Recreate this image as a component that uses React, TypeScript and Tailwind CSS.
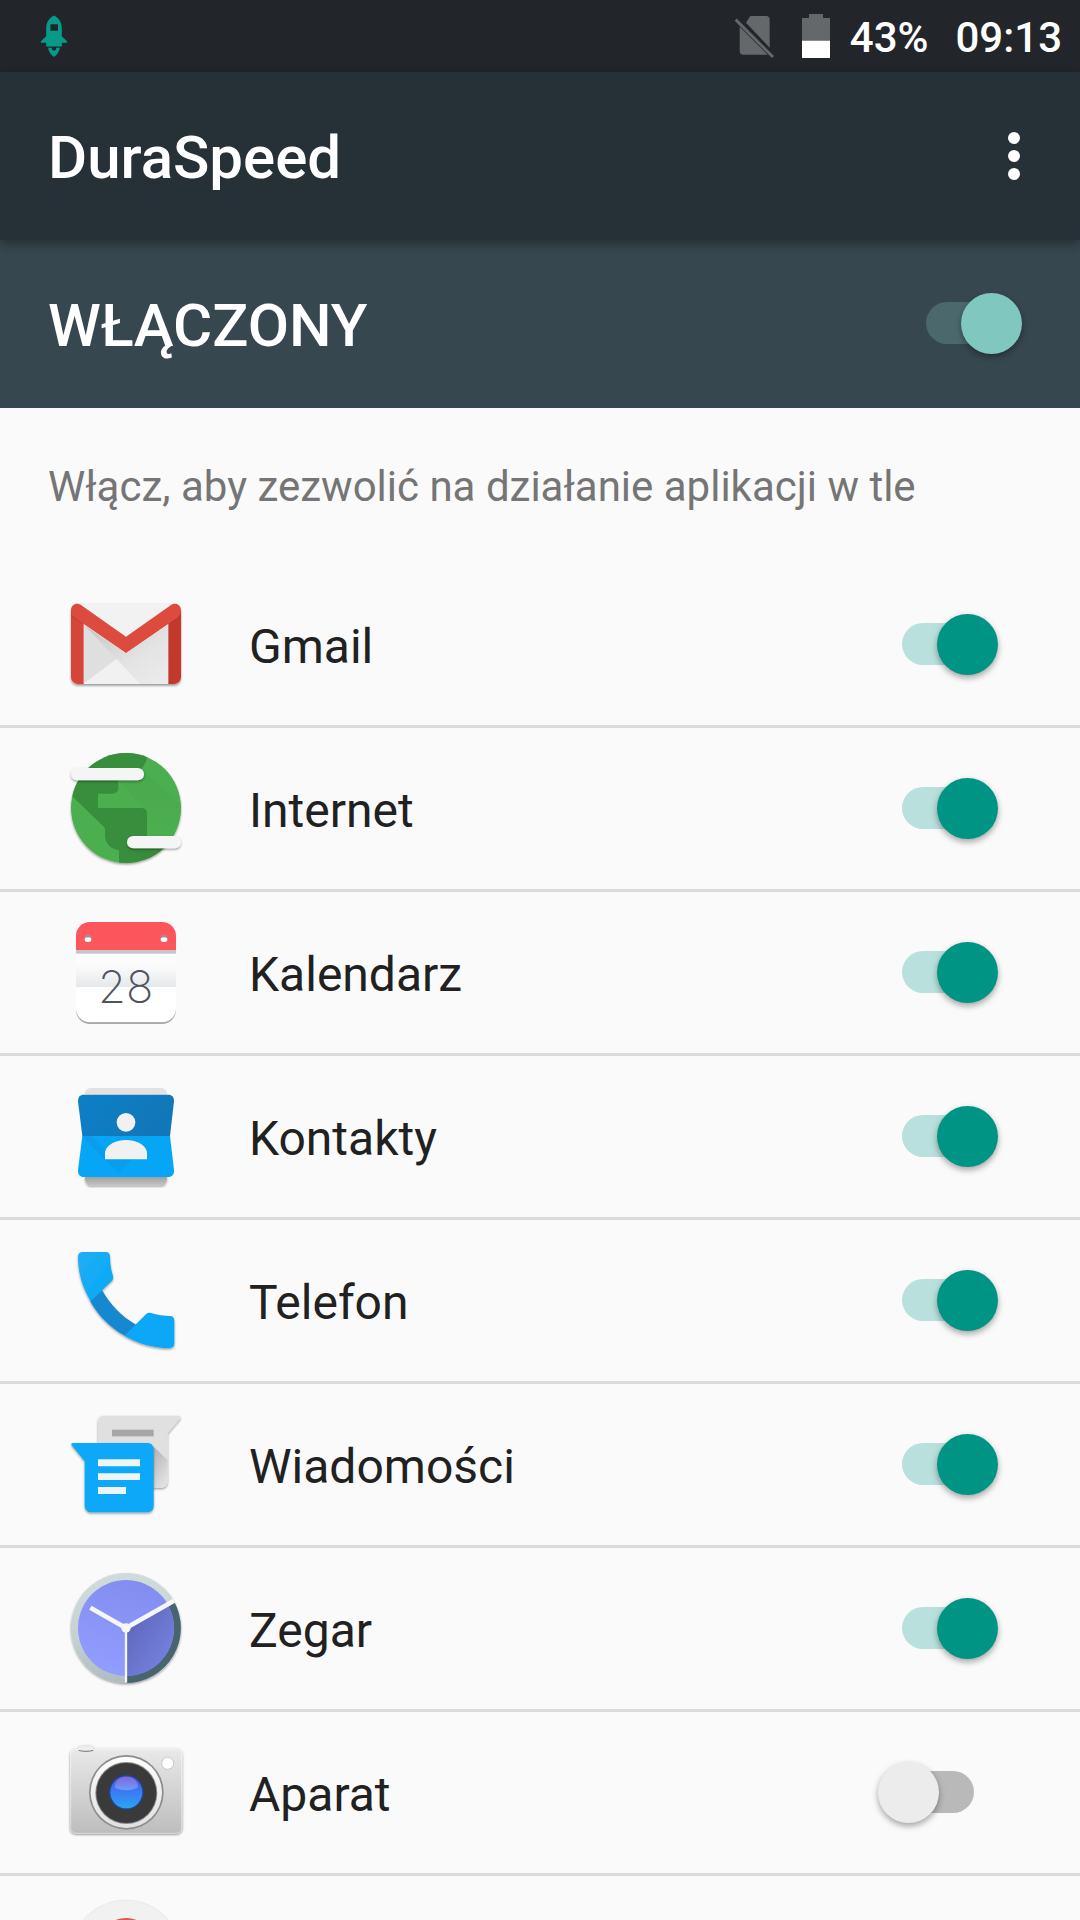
import { useState } from "react";
import type { ReactNode } from "react";

const iconClass = "size-[120px] shrink-0 overflow-visible";

function Shadow({ id, dy = 4, blur = 3, opacity = 0.4 }: { id: string; dy?: number; blur?: number; opacity?: number }) {
  return (
    <filter id={id} x="-20%" y="-20%" width="140%" height="150%">
      <feDropShadow dx="0" dy={dy} stdDeviation={blur} floodColor="#000" floodOpacity={opacity} />
    </filter>
  );
}

function GmailIcon() {
  return (
    <svg viewBox="48 15 360 360" className={iconClass} aria-hidden="true">
      <defs>
        <Shadow id="gm-s" dy={5} />
        <clipPath id="gm-c"><rect x="63" y="68" width="330" height="244" rx="20" /></clipPath>
        <linearGradient id="gm-g" x1="0" y1="0" x2="1" y2="1">
          <stop offset="0" stopColor="#c4c4c4" /><stop offset="0.6" stopColor="#e4e4e4" /><stop offset="1" stopColor="#ececec" />
        </linearGradient>
      </defs>
      <g filter="url(#gm-s)">
        <rect x="63" y="74" width="330" height="238" rx="20" fill="#e8e8e8" />
      </g>
      <g clipPath="url(#gm-c)">
        <rect x="80" y="68" width="296" height="244" fill="#f2f2f2" />
        <path d="M102 134 L228 220 L355 134 V312 H102Z" fill="url(#gm-g)" />
        <path d="M102 134 V308 L200 238Z" fill="#dfdfdf" />
        <path d="M102 310 L200 236 L270 312 H102Z" fill="#f1f1f1" />
        <path d="M63 90 H101 V312 H63Z" fill="#d5463a" />
        <path d="M355 90 H393 V312 H355Z" fill="#c1392d" />
        <path d="M63 108 L101 134 V134 L70 104Z M393 108 L355 134 L386 100Z" fill="#a8322a" opacity="0.6" />
      </g>
      <path d="M63 92 C63 72 82 66 96 77 L228 170 L360 77 C374 66 393 72 393 92 C393 102 388 109 381 114 L228 219 L75 114 C68 109 63 102 63 92Z" fill="#dd4b3e" />
    </svg>
  );
}

function InternetIcon() {
  return (
    <svg viewBox="48 57 360 360" className={iconClass} aria-hidden="true">
      <defs>
        <Shadow id="in-s" />
        <clipPath id="in-c"><circle cx="228" cy="234" r="165" /></clipPath>
        <linearGradient id="in-g" x1="0" y1="0" x2="0" y2="1">
          <stop offset="0" stopColor="#46a34a" /><stop offset="1" stopColor="#4caf50" />
        </linearGradient>
      </defs>
      <circle cx="228" cy="234" r="165" fill="#4caf50" filter="url(#in-s)" />
      <g clipPath="url(#in-c)">
        <path d="M275 116 L400 234 V330 L360 318 H291 V250 L205 150Z" fill="url(#in-g)" opacity="0.5" />
        <path d="M60 60 H300 C290 82 288 108 270 120 L205 150 V174 C205 185 198 191 187 191 H144 V234 H273 C285 234 291 240 291 252 V318 L345 355 L310 400 H207 V360 C180 358 165 338 165 316 V294 L60 192Z" fill="#388e3c" />
        <path d="M240 354 L290 400 H380 L375 354Z" fill="#378b3b" opacity="0.8" />
      </g>
      <g filter="url(#in-s)" fill="#f5f5f5">
        <rect x="63" y="114" width="219" height="37" rx="18.5" />
        <rect x="231" y="318" width="162" height="37" rx="18.5" />
      </g>
    </svg>
  );
}

function CalendarIcon() {
  return (
    <svg viewBox="48 39 360 360" className={iconClass} aria-hidden="true">
      <defs>
        <clipPath id="ca-c"><rect x="78" y="66" width="300" height="301" rx="42" /></clipPath>
        <linearGradient id="ca-g" x1="0" y1="0" x2="0" y2="1">
          <stop offset="0" stopColor="#fff" /><stop offset="0.4" stopColor="#fafafb" /><stop offset="1" stopColor="#e5e8ea" />
        </linearGradient>
      </defs>
      <rect x="78" y="71" width="300" height="301" rx="42" fill="#a9a9a9" />
      <g clipPath="url(#ca-c)">
        <rect x="78" y="66" width="300" height="301" fill="#fff" />
        <rect x="78" y="161" width="300" height="100" fill="url(#ca-g)" />
        <rect x="78" y="66" width="300" height="85" fill="#fc555b" />
        <rect x="78" y="150" width="300" height="11" fill="#c5c6ca" />
      </g>
      <circle cx="114" cy="114" r="11" fill="#b3868a" />
      <circle cx="342" cy="114" r="11" fill="#b3868a" />
      <ellipse cx="114" cy="119" rx="10" ry="7" fill="#fff" />
      <ellipse cx="342" cy="119" rx="10" ry="7" fill="#fff" />
      <text x="227" y="309" textAnchor="middle" fontSize="136" className="fill-[#4e5462] font-['Inter',sans-serif] font-extralight">28</text>
    </svg>
  );
}

function ContactsIcon() {
  return (
    <svg viewBox="48 21 360 360" className={iconClass} aria-hidden="true">
      <defs>
        <Shadow id="co-s" />
        <linearGradient id="co-g" x1="0" y1="0" x2="0" y2="1">
          <stop offset="0" stopColor="#9e9e9e" /><stop offset="1" stopColor="#c4c4c4" />
        </linearGradient>
        <linearGradient id="co-b" x1="0" y1="0" x2="1" y2="0.4">
          <stop offset="0" stopColor="#0c80c8" /><stop offset="1" stopColor="#1277b8" />
        </linearGradient>
      </defs>
      <path d="M104 74 C106 60 112 54 124 54 H332 C344 54 350 60 352 74Z" fill="#e2e2e2" />
      <path d="M104 320 H352 C350 338 343 346 332 346 H124 C113 346 106 338 104 320Z" fill="url(#co-g)" filter="url(#co-s)" />
      <path d="M84 94 C84 80 90 74 102 74 H354 C366 74 372 80 372 94 L360 198 H97Z" fill="url(#co-b)" />
      <path d="M97 198 H360 L372 300 C373 314 366 321 354 321 H102 C90 321 83 314 84 300Z" fill="#06a5f6" />
      <path d="M97 198 L180 284 L206 308 L245 267 H165 V240 L123 198Z" fill="#0a95e4" opacity="0.5" />
      <circle cx="228" cy="157" r="28" fill="#f1f1f1" />
      <path d="M165 268 V246 C170 222 200 210 228 210 C256 210 286 222 291 246 V268Z" fill="#f1f1f1" />
    </svg>
  );
}

function PhoneIcon() {
  return (
    <svg viewBox="48 33 360 360" className={iconClass} aria-hidden="true">
      <defs>
        <Shadow id="ph-s" />
        <linearGradient id="ph-g" x1="0" y1="0" x2="1" y2="1">
          <stop offset="0" stopColor="#22aef5" /><stop offset="1" stopColor="#03a9f4" />
        </linearGradient>
      </defs>
      <g filter="url(#ph-s)">
        <path d="M120 212 L156 180 C180 223 214 259 258 284 L226 318 C180 293 144 256 120 212Z" fill="#1488d0" />
        <path d="M98 66 H167 C176 66 180 71 180 80 C180 101 184 121 189 139 C190 145 189 149 185 153 L122 214 C97 172 84 128 84 80 C84 71 89 66 98 66Z" fill="url(#ph-g)" />
        <path d="M223 317 L289 252 C293 248 297 247 302 249 C321 255 340 258 359 258 C368 258 373 263 373 272 V340 C373 349 368 354 359 354 C311 354 265 341 223 317Z" fill="#07a7f7" />
      </g>
    </svg>
  );
}

function MessagesIcon() {
  return (
    <svg viewBox="48 525 360 360" className={iconClass} aria-hidden="true">
      <defs>
        <Shadow id="me-s" />
        <linearGradient id="me-g" x1="0" y1="0" x2="0.6" y2="1">
          <stop offset="0" stopColor="#a8a8a8" /><stop offset="1" stopColor="#e0e0e0" />
        </linearGradient>
      </defs>
      <g filter="url(#me-s)">
        <path d="M163 557 H385 C392 557 394 562 389 567 L353 610 V752 C353 766 345 773 332 773 H144 V577 C144 565 150 557 163 557Z" fill="#e0e0e0" />
      </g>
      <path d="M300 640 L353 690 V752 C353 766 345 773 332 773 H300Z" fill="url(#me-g)" />
      <rect x="186" y="599" width="125" height="20" fill="#a6a6a6" />
      <g filter="url(#me-s)">
        <path d="M70 639 H290 C304 639 311 647 311 660 V826 C311 840 304 847 290 847 H125 C111 847 104 839 104 826 V694 L65 646 C62 642 65 639 70 639Z" fill="#09a8f7" />
      </g>
      <path d="M144 688 H270 V709 H144Z M144 730 H270 V750 H144Z M144 771 H228 V792 H144Z" fill="#eef5f8" />
    </svg>
  );
}

function ClockIcon() {
  return (
    <svg viewBox="48 27 360 360" className={iconClass} aria-hidden="true">
      <defs>
        <Shadow id="cl-s" />
        <linearGradient id="cl-l" x1="0.6" y1="0" x2="0.3" y2="1">
          <stop offset="0" stopColor="#828df0" /><stop offset="1" stopColor="#919dff" />
        </linearGradient>
        <linearGradient id="cl-d" x1="0" y1="0" x2="1" y2="1">
          <stop offset="0" stopColor="#5b62b4" /><stop offset="0.8" stopColor="#7280dd" />
        </linearGradient>
        <linearGradient id="cl-r" x1="0" y1="0" x2="0" y2="1">
          <stop offset="0" stopColor="#d0dbdc" /><stop offset="0.6" stopColor="#c4d1d3" /><stop offset="1" stopColor="#aebcc0" />
        </linearGradient>
      </defs>
      <circle cx="228" cy="204" r="165" fill="url(#cl-r)" filter="url(#cl-s)" />
      <path d="M228 204 L372 124 A165 165 0 0 1 228 369Z" fill="#48646f" />
      <circle cx="228" cy="204" r="144" fill="url(#cl-l)" />
      <path d="M228 204 L354 134 A144 144 0 0 1 228 348Z" fill="url(#cl-d)" />
      <path d="M228 204 L372 122" stroke="#f5f7fa" strokeWidth="14" />
      <path d="M228 204 L121 143" stroke="#f5f7fa" strokeWidth="14" />
      <path d="M228 204 V368" stroke="#f5f7fa" strokeWidth="7" />
      <circle cx="228" cy="204" r="14" fill="#f5f7fa" />
    </svg>
  );
}

function CameraIcon() {
  return (
    <svg viewBox="48 9 360 360" className={iconClass} aria-hidden="true">
      <defs>
        <Shadow id="cm-s" dy={2} opacity={0.45} />
        <linearGradient id="cm-b" x1="0" y1="0" x2="0" y2="1">
          <stop offset="0" stopColor="#e9e9e9" /><stop offset="1" stopColor="#bdbdbd" />
        </linearGradient>
        <linearGradient id="cm-r" x1="0" y1="0" x2="0" y2="1">
          <stop offset="0" stopColor="#fdfdfd" /><stop offset="1" stopColor="#e0e0e0" />
        </linearGradient>
        <linearGradient id="cm-l" x1="0" y1="0" x2="0" y2="1">
          <stop offset="0" stopColor="#6a50d8" /><stop offset="0.4" stopColor="#3f73f4" /><stop offset="1" stopColor="#2aa5f0" />
        </linearGradient>
        <linearGradient id="cm-h" x1="0" y1="0" x2="0" y2="1">
          <stop offset="0" stopColor="#b89af0" stopOpacity="0.3" /><stop offset="1" stopColor="#9fc0ff" stopOpacity="0.5" />
        </linearGradient>
      </defs>
      <g filter="url(#cm-s)">
        <rect x="86" y="47" width="44" height="18" rx="8" fill="#d8d8d8" />
        <rect x="60" y="56" width="337" height="256" rx="18" fill="url(#cm-b)" />
      </g>
      <rect x="62" y="58" width="333" height="252" rx="16" fill="none" stroke="#fff" strokeOpacity="0.45" strokeWidth="3" />
      <rect x="86" y="49" width="44" height="11" rx="5" fill="#eee" />
      <path d="M86 61 C96 65 120 65 130 61" stroke="#777" strokeWidth="3" fill="none" />
      <circle cx="229" cy="187" r="112" fill="#8c8c8c" />
      <circle cx="229" cy="187" r="107" fill="url(#cm-r)" />
      <circle cx="229" cy="189" r="93" fill="#8a8a8a" />
      <circle cx="229" cy="189" r="90" fill="#3a3a3b" />
      <circle cx="229" cy="187" r="52" fill="#1d4795" />
      <circle cx="229" cy="187" r="48" fill="url(#cm-l)" />
      <path d="M194 172 C197 148 212 140 229 140 C247 140 261 148 264 172 C250 184 208 184 194 172Z" fill="url(#cm-h)" />
      <circle cx="353" cy="100" r="18" fill="#fff" stroke="#c9c9c9" strokeWidth="3" />
    </svg>
  );
}

function NextAppIcon() {
  return (
    <svg viewBox="48 501 360 360" className={iconClass} aria-hidden="true">
      <circle cx="228" cy="678" r="168" fill="#f1f1f1" stroke="#e4e4e4" strokeWidth="2" />
      <circle cx="228" cy="650" r="86" fill="#d9594c" />
    </svg>
  );
}

type SwitchProps = { id: string; checked: boolean; onChange: () => void; tone: "dark" | "light" };

const switchBase =
  "relative block h-[60px] w-[120px] shrink-0 cursor-pointer appearance-none before:absolute before:left-6 before:top-2 before:h-[42px] before:w-[72px] before:rounded-full after:absolute after:left-0 after:-top-px after:size-[61px] after:rounded-full after:shadow-[0_3px_6px_rgba(0,0,0,0.35)] checked:after:left-[59px]";

const tones = {
  dark: "before:bg-[#4b696d] after:bg-[#80c7bf]",
  light: "before:bg-[#b9b9b9] after:bg-[#ececec] checked:before:bg-[#b9e0dc] checked:after:bg-[#009485]",
};

function Switch({ id, checked, onChange, tone }: SwitchProps) {
  return (
    <input id={id} type="checkbox" role="switch" checked={checked} onChange={onChange} className={`${switchBase} ${tones[tone]}`} />
  );
}

const apps: { id: string; name: string; icon: ReactNode; on: boolean }[] = [
  { id: "gmail", name: "Gmail", icon: <GmailIcon />, on: true },
  { id: "internet", name: "Internet", icon: <InternetIcon />, on: true },
  { id: "kalendarz", name: "Kalendarz", icon: <CalendarIcon />, on: true },
  { id: "kontakty", name: "Kontakty", icon: <ContactsIcon />, on: true },
  { id: "telefon", name: "Telefon", icon: <PhoneIcon />, on: true },
  { id: "wiadomosci", name: "Wiadomości", icon: <MessagesIcon />, on: true },
  { id: "zegar", name: "Zegar", icon: <ClockIcon />, on: true },
  { id: "aparat", name: "Aparat", icon: <CameraIcon />, on: false },
];

function StatusBar() {
  return (
    <div className="flex h-[72px] shrink-0 items-center justify-between bg-[#22262a] pl-[38px] pr-[18px]">
      <svg viewBox="108 0 98 216" className="h-[72px] w-8 overflow-visible" aria-hidden="true">
        <path fillRule="evenodd" fill="#079a89" d="M157 45 C172 52 181 67 181 84 V109 L197 124 V129 H181 V140 H133 V129 H117 V124 L133 109 V84 C133 67 142 52 157 45Z M146 72 V92 H169 V72Z" />
        <path fill="#079a89" d="M139 144 H150 C150 150 153 153 157 153 C161 153 164 150 164 144 H175 C174 156 166 166 157 172 C148 166 140 156 139 144Z" />
      </svg>
      <div className="flex h-[72px] items-center text-[42px] font-medium leading-[48px] text-white">
        <svg viewBox="165 0 120 216" className="mr-7 h-[72px] w-10" aria-hidden="true">
          <path d="M214 48 H262 C269 48 272 52 272 59 V143 L201 68 Z" fill="#64686b" />
          <path d="M182 80 L266 164 H193 C186 164 182 160 182 153Z" fill="#64686b" />
          <path d="M170 59 L282 171" stroke="#64686b" strokeWidth="9" />
        </svg>
        <svg viewBox="366 0 84 216" className="mr-5 h-[72px] w-7" aria-hidden="true">
          <path d="M387 42 H429 V54 H450 V122 H366 V54 H387Z" fill="#64686b" />
          <path d="M366 122 H450 V174 H366Z" fill="#fff" />
        </svg>
        <span className="mr-[27px] pt-1">43%</span>
        <span className="pt-1">09:13</span>
      </div>
    </div>
  );
}

export default function App() {
  const [enabled, setEnabled] = useState(true);
  const [state, setState] = useState<Record<string, boolean>>(() => Object.fromEntries(apps.map((a) => [a.id, a.on])));

  return (
    <div className="flex h-screen flex-col overflow-hidden bg-[#fafafa] font-['Roboto',sans-serif]">
      <StatusBar />
      <header className="relative z-10 flex h-[168px] shrink-0 items-center justify-between bg-[#263137] pl-12 pr-[42px] shadow-[0_4px_10px_rgba(0,0,0,0.35)]">
        <h1 className="pt-1 text-[60px] font-medium leading-[72px] text-white">DuraSpeed</h1>
        <button type="button" aria-label="Więcej opcji" className="flex h-[72px] w-12 flex-col items-center justify-center gap-1.5">
          <span className="size-3 rounded-full bg-white" />
          <span className="size-3 rounded-full bg-white" />
          <span className="size-3 rounded-full bg-white" />
        </button>
      </header>
      <div className="flex h-[168px] shrink-0 items-center justify-between bg-[#37474f] pl-12 pr-[58px]">
        <label htmlFor="master" className="pt-1 text-[60px] font-medium leading-[72px] text-white">WŁĄCZONY</label>
        <Switch id="master" checked={enabled} onChange={() => setEnabled(!enabled)} tone="dark" />
      </div>
      <main className="min-h-0 flex-1 overflow-y-auto [scrollbar-width:none]">
        <p className="px-12 pb-[53px] pt-[55px] text-[42px] leading-[48px] text-[#757575]">Włącz, aby zezwolić na działanie aplikacji w tle</p>
        <ul>
          {apps.map((app) => (
            <li key={app.id} className="flex items-center border-b-[3px] border-[#dbdbdb] pb-5 pl-[66px] pr-[82px] pt-[21px]">
              {app.icon}
              <label htmlFor={app.id} className="ml-[63px] flex-1 pt-1 text-[48px] leading-[60px] text-[#212121]">{app.name}</label>
              <Switch id={app.id} checked={state[app.id]} onChange={() => setState({ ...state, [app.id]: !state[app.id] })} tone="light" />
            </li>
          ))}
          <li className="flex items-center pb-5 pl-[66px] pr-[82px] pt-[21px]">
            <NextAppIcon />
          </li>
        </ul>
      </main>
    </div>
  );
}
